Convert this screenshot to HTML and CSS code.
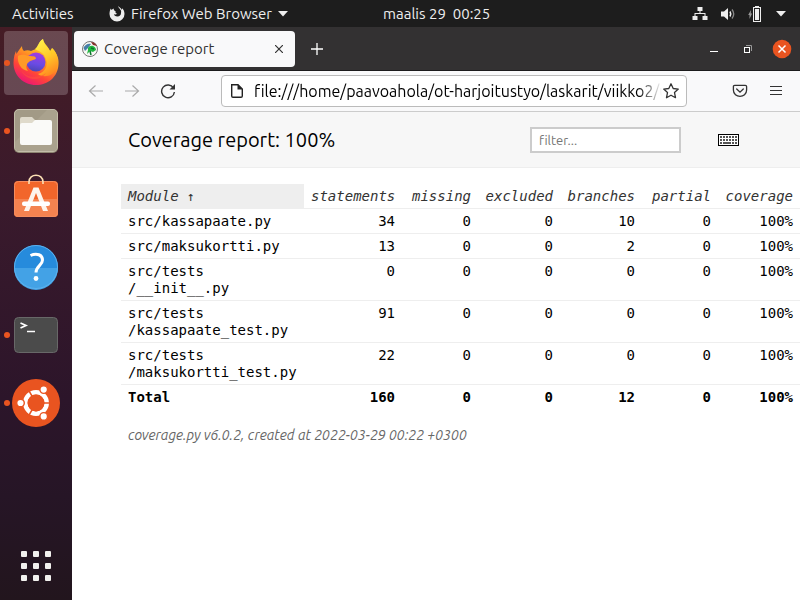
FILE: index.html
```html
<!DOCTYPE html>
<html lang="en">
<head>
<meta charset="utf-8">
<title>Coverage report</title>
<link rel="stylesheet" href="styles.css">
</head>
<body>
<header class="topbar">
  <button class="top-button activities">Activities</button>
  <button class="top-button app-menu">
    <svg width="16" height="16" viewBox="0 0 16 16"><path d="M9 0 C9.500 2 11 2.500 11.500 4 C12.500 4.500 12 6 12 7 C12 9 10.500 10.500 8.500 10.500 C6.300 10.500 5 9.500 5 8 C6 9 7.500 8.700 8 7.600 C6.500 7.300 6 6.600 7 5.800 C6 5 4.500 4.200 4.600 2.500 C3.700 3 3 3.500 2.600 3.900 L1.700 2.500 C1 4 .500 6 .500 8 A7.500 7.500 0 0 0 15.500 8 C15.500 5.500 14.500 3.500 13 2.300 L13 4 C12 2 10.500 1.300 9 0 Z" fill="#eee"/></svg>
    <span>Firefox Web Browser</span>
    <svg width="10" height="6" viewBox="0 0 10 6"><path d="M0 0 H10 L5 5.500 Z" fill="#eee"/></svg>
  </button>
  <time class="clock">maalis 29&nbsp; 00:25</time>
  <button class="top-button status" aria-label="System menu">
    <svg width="16" height="16" viewBox="0 0 16 16"><path d="M5.500 1 h5 v4 h-2 v2 h5 v3 h2 v4 h-5 v-4 h2 v-2 h-9 v2 h2 v4 H.500 v-4 h2 V7 h5 V5 h-2 Z" fill="#eee"/></svg>
    <svg width="16" height="16" viewBox="0 0 16 16"><path d="M1 5.500 H4 L8 2 V14 L4 10.500 H1 Z" fill="#eee"/><path d="M10 5.500 Q11.500 8 10 10.500" stroke="#eee" stroke-width="1.500" fill="none"/><path d="M12 3.500 Q15.500 8 12 12.500" stroke="#888" stroke-width="1.300" fill="none"/></svg>
    <svg width="16" height="16" viewBox="0 0 16 16"><path d="M3 4 L.200 9 H1.500 V13 L4.100 7.500 H2.700 Z" fill="#999"/><path d="M7 0 h4 v1 h2 v15 h-8 V1 h2 Z" fill="#eee"/><path d="M6 2 h6 v13 h-6 Z" fill="#222"/><path d="M7 3 h4 v11 h-4 Z" fill="#eee"/></svg>
    <svg width="10" height="6" viewBox="0 0 10 6"><path d="M0 0 H10 L5 5.500 Z" fill="#eee"/></svg>
  </button>
</header>
<div class="desktop">
  <nav class="dock" aria-label="Dock">
    <button class="dock-item running focused" aria-label="Firefox">
      <svg width="64" height="64" viewBox="0 0 64 64">
        <defs>
          <linearGradient id="fx-body" x1=".8" y1="0" x2=".25" y2="1"><stop offset=".1" stop-color="#ffe226"/><stop offset=".42" stop-color="#ff9a22"/><stop offset=".72" stop-color="#ff4438"/><stop offset="1" stop-color="#e9107d"/></linearGradient>
          <linearGradient id="fx-flame" x1=".3" y1="0" x2=".7" y2="1"><stop offset="0" stop-color="#fff14a"/><stop offset=".5" stop-color="#ffc928"/><stop offset="1" stop-color="#ff8420"/></linearGradient>
          <linearGradient id="fx-globe" x1=".6" y1="0" x2=".4" y2="1"><stop offset="0" stop-color="#a43be0"/><stop offset=".6" stop-color="#6a4be4"/><stop offset="1" stop-color="#4b45b5"/></linearGradient>
        </defs>
        <path d="M18 15 C18 18 19 19 20 20 C22 19 25 19 27 20 L34 17 C35 12 36 10 39 8 C40 13 44 15 46 20 L48 17 C53 22 55 28 54.500 33 C54 46 44 54 32 54 C19 54 9.500 44 9.500 32 C9.500 26 11 22 12 20 L12.500 23 C14 20 16 18 18 15 Z" fill="url(#fx-body)"/>
        <path d="M31 18 C34 16 34 11 39 8 C39 14 46 16 48 25 C49 20 48 19 48 17 C54 22 55 31 53 37 C49 46 39 47 34 43 C42 41 45 33 41 26 C39 21 34 20 31 18 Z" fill="url(#fx-flame)"/>
        <circle cx="32" cy="31" r="9.500" fill="url(#fx-globe)"/>
        <path d="M14 25 C18 23 21 24 24 25 C28 25 32 25 32 27.500 C31 29 27 29 25 31 C22 33 21.500 37 24 40 C17 39 13 32 14 25 Z" fill="#ff9a28"/>
        <path d="M17 39 C22 47 34 48 42 42 C36 51 22 50 17 39 Z" fill="#ff503c" opacity=".6"/>
      </svg>
    </button>
    <button class="dock-item running" aria-label="Files">
      <svg width="64" height="64" viewBox="0 0 64 64"><rect x="10" y="10" width="44" height="44" rx="5" fill="#8d8571"/><rect x="10.500" y="10.500" width="43" height="42" rx="4.500" fill="#a29a86" stroke="#c3bda9"/><path d="M11 43 L43 11 H49 Q53 11 53 15 V49 Q53 52 49 52 H15 Q11 52 11 49 Z" fill="#aaa28e"/><path d="M16 22 V20 Q16 18 18 18 H28 L31 21 H46 V26 H16 Z" fill="#dfdacb"/><path d="M16 26 Q16 24 18 24 H28 L31 21 H46 Q48 21 48 23 V44 Q48 46 46 46 H18 Q16 46 16 44 Z" fill="#fafaf8"/></svg>
    </button>
    <button class="dock-item" aria-label="Ubuntu Software">
      <svg width="64" height="64" viewBox="0 0 64 64"><rect x="10" y="14" width="44" height="36" rx="4" fill="#f2662b"/><path d="M10 32 H54 V46 Q54 50 50 50 H14 Q10 50 10 46 Z" fill="#f48350"/><rect x="10.500" y="14.500" width="43" height="35" rx="4" fill="none" stroke="#f58c5e"/><path d="M25 17 V15 C25 6 39 6 39 15 V17" fill="none" stroke="#fbe0b4" stroke-width="1.600"/><path d="M29.500 20.500 H34.500 L44 44 H39 L32 26 L25 44 H20 Z" fill="#fdf4ec"/><rect x="18" y="34.500" width="28" height="4.500" rx="2" fill="#fff"/></svg>
    </button>
    <button class="dock-item" aria-label="Help">
      <svg width="64" height="64" viewBox="0 0 64 64"><circle cx="32" cy="32" r="22" fill="#268bdc"/><path d="M10 33 H54 A22 22 0 0 1 10 33 Z" fill="#43a2e6"/><circle cx="32" cy="32" r="21.500" fill="none" stroke="#5cb2ee"/><path d="M26.500 20.500 C33 17.500 38.500 20 38.500 25 C38.500 30.500 32 31 32 37.500" fill="none" stroke="#fff" stroke-width="3"/><circle cx="32" cy="43.500" r="2.400" fill="#fff"/></svg>
    </button>
    <button class="dock-item running" aria-label="Terminal">
      <svg width="64" height="64" viewBox="0 0 64 64"><rect x="10.500" y="14.500" width="43" height="35" rx="4" fill="#4b4b4b" stroke="#686868"/><path d="M16.500 20 L22 22.500 L16.500 25" fill="none" stroke="#fff" stroke-width="1.700"/><path d="M23 28.500 H31" stroke="#fff" stroke-width="1.500"/></svg>
    </button>
    <button class="dock-item running" aria-label="Ubuntu">
      <svg width="64" height="64" viewBox="0 0 64 64"><circle cx="32" cy="32" r="24" fill="#e95420"/><circle cx="32" cy="32" r="10.700" fill="none" stroke="#fff" stroke-width="4.500"/><g stroke="#e95420" stroke-width="1.500"><path d="M32 32 L24 18.200 M32 32 L24 45.800 M32 32 H48"/></g><circle cx="32" cy="32" r="8.400" fill="#e95420"/><g fill="#fff" stroke="#e95420" stroke-width="1.400"><circle cx="16.500" cy="32" r="3.800"/><circle cx="39.700" cy="18.600" r="3.800"/><circle cx="39.700" cy="45.400" r="3.800"/></g></svg>
    </button>
    <button class="dock-item show-apps" aria-label="Show Applications">
      <svg width="64" height="64" viewBox="0 0 64 64" fill="#f2f1ee"><rect x="17" y="17" width="6" height="6" rx="1"/><rect x="29" y="17" width="6" height="6" rx="1"/><rect x="41" y="17" width="6" height="6" rx="1"/><rect x="17" y="29" width="6" height="6" rx="1"/><rect x="29" y="29" width="6" height="6" rx="1"/><rect x="41" y="29" width="6" height="6" rx="1"/><rect x="17" y="41" width="6" height="6" rx="1"/><rect x="29" y="41" width="6" height="6" rx="1"/><rect x="41" y="41" width="6" height="6" rx="1"/></svg>
    </button>
  </nav>
  <section class="browser">
    <div class="tabstrip">
      <div class="tab">
        <svg width="16" height="16" viewBox="0 0 16 16"><circle cx="8" cy="8" r="7.500" fill="#f8f8f4" stroke="#777"/><path d="M1.500 7 C3 3 7 2 9 3 L6 7 L3 10 Z" fill="#477fa8"/><path d="M9 1 C12 1 14 3 15 5 L11 4 Z" fill="#85302b"/><path d="M6 7 C8 3 14 5 14 9 L11 11 L8 10 L5 13 L6 9 Z" fill="#20b640"/><path d="M9 7 L12 8 M8 10 L9 14" stroke="#08752a" stroke-width="1.500"/></svg>
        <span class="tab-title">Coverage report</span>
        <button class="icon-button tab-close" aria-label="Close tab"><svg width="8" height="8" viewBox="0 0 8 8"><path d="M0 0 L8 8 M8 0 L0 8" stroke="#333" stroke-width="1.200"/></svg></button>
      </div>
      <button class="icon-button new-tab" aria-label="New tab"><svg width="12" height="12" viewBox="0 0 12 12"><path d="M0 6 H12 M6 0 V12" stroke="#fff" stroke-width="1.300"/></svg></button>
      <div class="window-controls">
        <button class="icon-button" aria-label="Minimize"><svg width="20" height="20" viewBox="0 0 20 20"><path d="M6 12.500 H14" stroke="#fff"/></svg></button>
        <button class="icon-button" aria-label="Restore"><svg width="20" height="20" viewBox="0 0 20 20" fill="none"><path d="M8 6.500 H13.500 V12" stroke="#999"/><rect x="6.500" y="8.500" width="5" height="5" stroke="#fff"/></svg></button>
        <button class="icon-button" aria-label="Close"><svg width="20" height="20" viewBox="0 0 20 20"><circle cx="10" cy="10" r="9.300" fill="#e95420"/><path d="M6.500 6.500 L13.500 13.500 M13.500 6.500 L6.500 13.500" stroke="#fff" stroke-width="1.500"/></svg></button>
      </div>
    </div>
    <div class="toolbar">
      <button class="icon-button tool" aria-label="Back"><svg width="16" height="16" viewBox="0 0 16 16"><path d="M15 8 H1.500 M7.500 2.500 L1.500 8 L7.500 13.500" fill="none" stroke="#aaa" stroke-width="1.200"/></svg></button>
      <button class="icon-button tool" aria-label="Forward"><svg width="16" height="16" viewBox="0 0 16 16"><path d="M1 8 H14.500 M8.500 2.500 L14.500 8 L8.500 13.500" fill="none" stroke="#aaa" stroke-width="1.200"/></svg></button>
      <button class="icon-button tool" aria-label="Reload"><svg width="16" height="16" viewBox="0 0 16 16"><path d="M13.500 5 A6.400 6.400 0 1 0 14.400 9" fill="none" stroke="#333" stroke-width="1.400"/><path d="M15 1 V6.500 H9.500 Z" fill="#333"/></svg></button>
      <div class="urlbar">
        <svg width="16" height="16" viewBox="0 0 16 16"><path d="M3.700 1.700 H10 L14.300 6 V13 Q14.300 14.300 13 14.300 H5 Q3.700 14.300 3.700 13 Z" fill="none" stroke="#222" stroke-width="1.400"/><path d="M9.500 1.500 V6.500 H14.500 Z" fill="#222"/></svg>
        <input class="url-input" type="text" aria-label="Address" value="file:///home/paavoahola/ot-harjoitustyo/laskarit/viikko2/unicafe/htmlcov/index.html">
        <button class="icon-button" aria-label="Bookmark this page"><svg width="18" height="18" viewBox="0 0 18 18"><path d="M9 1.800 L11.200 6.500 L16.300 7.100 L12.500 10.600 L13.500 15.700 L9 13.200 L4.500 15.700 L5.500 10.600 L1.700 7.100 L6.800 6.500 Z" fill="none" stroke="#333" stroke-width="1.300" stroke-linejoin="round"/></svg></button>
      </div>
      <button class="icon-button tool" aria-label="Save to Pocket"><svg width="16" height="16" viewBox="0 0 16 16" fill="none" stroke="#333" stroke-width="1.300"><path d="M2.700 2.300 H13.300 Q14.600 2.300 14.600 3.600 V7 C14.600 15.600 1.400 15.600 1.400 7 V3.600 Q1.400 2.300 2.700 2.300 Z"/><path d="M4.700 6 L8 9.200 L11.300 6" stroke-linecap="round"/></svg></button>
      <button class="icon-button tool" aria-label="Menu"><svg width="16" height="16" viewBox="0 0 16 16"><path d="M2 3.500 H14 M2 7.500 H14 M2 11.500 H14" stroke="#333" stroke-width="1.200"/></svg></button>
    </div>
    <header class="report-header">
      <h1>Coverage report: 100%</h1>
      <input class="filter" type="text" placeholder="filter..." aria-label="Filter modules">
      <button class="icon-button keyboard" aria-label="Keyboard shortcuts"><svg width="21" height="12" viewBox="0 0 21 12" shape-rendering="crispEdges"><rect x=".5" y=".5" width="20" height="11" fill="#fff" stroke="#000"/><g fill="none" stroke="#555" stroke-width="2"><path d="M2 3 H19" stroke-dasharray="2 1"/><path d="M2 6 H4 M5 6 H7 M8 6 H10 M11 6 H13 M14 6 H16 M17 6 H19"/><path d="M2 9 H4 M5 9 H13 M14 9 H16 M17 9 H19"/></g></svg></button>
    </header>
    <main class="report">
      <table class="modules">
        <colgroup><col><col class="c-statements"><col class="c-narrow"><col class="c-wide"><col class="c-wide"><col class="c-narrow"><col class="c-wide"></colgroup>
        <thead>
          <tr><th class="sorted">Module <span class="arrow">↑</span></th><th>statements</th><th>missing</th><th>excluded</th><th>branches</th><th>partial</th><th>coverage</th></tr>
        </thead>
        <tbody>
          <tr><td>src/kassapaate.py</td><td>34</td><td>0</td><td>0</td><td>10</td><td>0</td><td>100%</td></tr>
          <tr><td>src/maksukortti.py</td><td>13</td><td>0</td><td>0</td><td>2</td><td>0</td><td>100%</td></tr>
          <tr><td>src/tests<br>/__init__.py</td><td>0</td><td>0</td><td>0</td><td>0</td><td>0</td><td>100%</td></tr>
          <tr><td>src/tests<br>/kassapaate_test.py</td><td>91</td><td>0</td><td>0</td><td>0</td><td>0</td><td>100%</td></tr>
          <tr><td>src/tests<br>/maksukortti_test.py</td><td>22</td><td>0</td><td>0</td><td>0</td><td>0</td><td>100%</td></tr>
        </tbody>
        <tfoot>
          <tr><td>Total</td><td>160</td><td>0</td><td>0</td><td>12</td><td>0</td><td>100%</td></tr>
        </tfoot>
      </table>
      <footer class="created">coverage.py v6.0.2, created at 2022-03-29 00:22 +0300</footer>
    </main>
  </section>
</div>
</body>
</html>
```
FILE: styles.css
```css
* {
  box-sizing: border-box;
}

body {
  margin: 0;
  min-height: 100vh;
  display: flex;
  flex-direction: column;
  background: #fff;
  color: #000;
  font-family: Ubuntu, "Noto Sans", sans-serif;
  font-size: 15px;
  font-variant-ligatures: none;
}

button {
  border: 0;
  padding: 0;
  background: none;
  color: inherit;
  font: inherit;
  font-variant-ligatures: none;
}

svg {
  display: block;
  flex: none;
}

.topbar {
  display: flex;
  align-items: center;
  height: 27px;
  padding: 0 12px;
  background: #1d1d1d;
  color: #eee;
  white-space: nowrap;
}

.top-button {
  display: flex;
  align-items: center;
  gap: 6px;
}

.activities {
  width: 97px;
}

.clock {
  margin-left: 95px;
}

.status {
  gap: 12px;
  margin-left: auto;
  padding-right: 2px;
}

.desktop {
  flex: 1;
  display: flex;
}

.dock {
  flex: none;
  display: flex;
  flex-direction: column;
  gap: 4px;
  width: 72px;
  padding: 4px 4px 2px;
  background: linear-gradient(#451c25, #3a1a2c 30%, #2c152a 65%, #261526 82%, #22151d);
}

.dock-item {
  position: relative;
  width: 64px;
  height: 64px;
  border-radius: 4px;
}

.focused {
  background: rgba(255, 255, 255, 0.2);
}

.running::before {
  content: "";
  position: absolute;
  left: 0;
  top: 29px;
  width: 6px;
  height: 6px;
  border-radius: 50%;
  background: #e95420;
}

.show-apps {
  margin-top: auto;
}

.browser {
  flex: 1;
  min-width: 0;
}

.icon-button {
  display: flex;
  align-items: center;
  justify-content: center;
}

.tabstrip {
  display: flex;
  align-items: center;
  height: 44px;
  padding: 0 8px 0 2px;
  border-bottom: 1px solid #1c1b1c;
  background: #333132;
}

.tab {
  display: flex;
  align-items: center;
  gap: 6px;
  width: 221px;
  height: 36px;
  padding: 0 8px;
  border-radius: 4px;
  background: #f9f9fa;
  color: #333;
}

.tab-title {
  flex: 1;
}

.tab-close {
  width: 16px;
  height: 16px;
}

.new-tab {
  width: 44px;
  height: 36px;
}

.window-controls {
  display: flex;
  gap: 14px;
  margin-left: auto;
}

.toolbar {
  display: flex;
  align-items: center;
  height: 41px;
  padding: 0 6px;
  border-bottom: 1px solid #ccc;
  background: #f9f9fa;
}

.tool {
  width: 36px;
  height: 36px;
}

.urlbar {
  flex: 1;
  min-width: 0;
  display: flex;
  align-items: center;
  height: 32px;
  margin: 0 35px;
  padding: 0 6px;
  border: 1px solid #bbb;
  border-radius: 4px;
  background: #fff;
}

.url-input {
  flex: 1;
  min-width: 0;
  padding: 0 0 0 10px;
  border: 0;
  outline: 0;
  background: none;
  color: #000;
  font: inherit;
  font-size: 16px;
  font-variant-ligatures: none;
  -webkit-mask-image: linear-gradient(to left, transparent, #000 24px);
  mask-image: linear-gradient(to left, transparent, #000 24px);
}

.report-header {
  display: flex;
  align-items: center;
  height: 56px;
  padding: 0 61px 0 56px;
  border-bottom: 1px solid #eee;
  background: #f7f7f7;
}

.report-header h1 {
  flex: 1;
  margin: 0;
  font-size: 20px;
  font-weight: 400;
}

.filter {
  width: 151px;
  height: 26px;
  padding: 0 7px;
  border: 2px solid #ccc;
  background: #fff;
  font: inherit;
  font-size: 13px;
  font-variant-ligatures: none;
}

.filter::placeholder {
  color: #757575;
}

.keyboard {
  margin-left: 37px;
}

.report {
  padding: 16px 0 0 49px;
}

.modules {
  width: 100%;
  table-layout: fixed;
  border-collapse: separate;
  border-spacing: 0;
  font-family: "DejaVu Sans Mono", monospace;
  font-size: 14px;
  line-height: 17px;
}

.c-statements {
  width: 98px;
}

.c-narrow {
  width: 76px;
}

.c-wide {
  width: 82px;
}

.modules th,
.modules td {
  padding: 4px 7px 3px;
  border-bottom: 1px solid #eee;
  text-align: right;
  vertical-align: top;
}

.modules th:first-child,
.modules td:first-child {
  text-align: left;
}

.modules th {
  color: #333;
  font-style: italic;
  font-weight: 400;
  white-space: nowrap;
}

.modules .sorted {
  background: #eee;
}

.arrow {
  font-size: 13px;
}

.modules tfoot td {
  border-bottom: 0;
  font-weight: 700;
}

.created {
  padding: 18px 7px;
  color: #666;
  font-size: 14px;
  font-style: italic;
}
```
